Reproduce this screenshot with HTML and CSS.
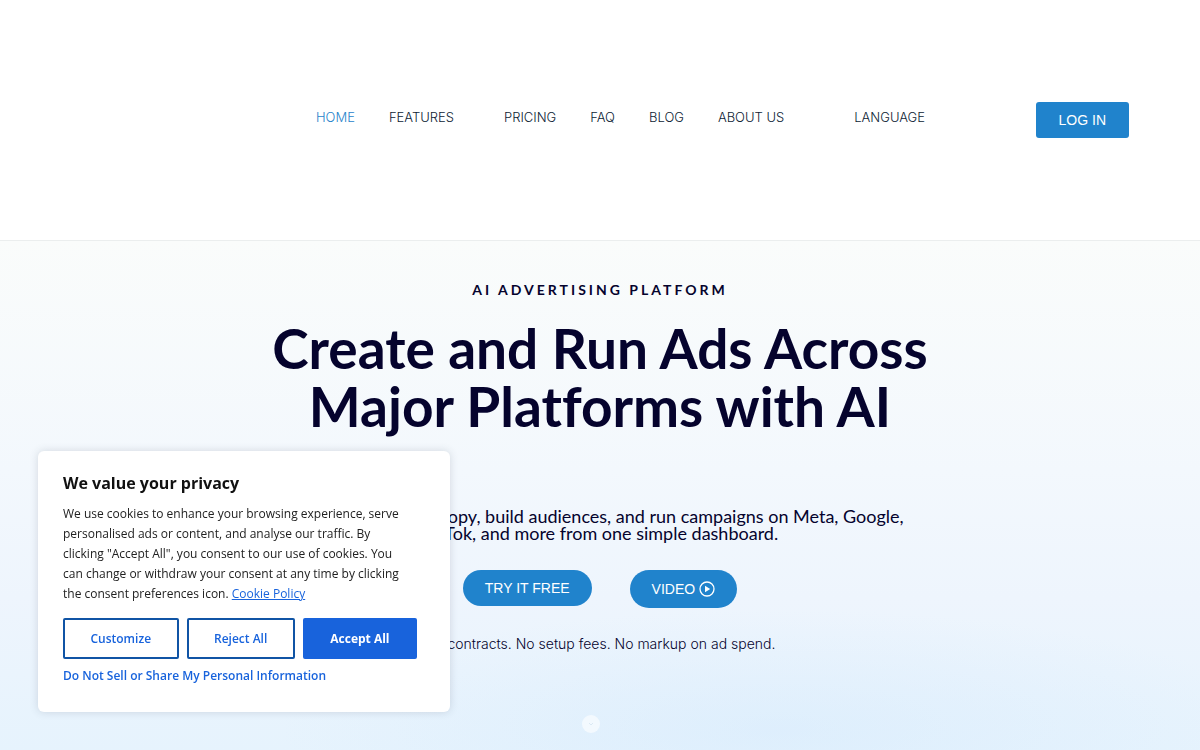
FILE: index.html
```html
<!DOCTYPE html>
<html lang="en">
<head>
    <meta charset="UTF-8">
    <meta name="viewport" content="width=device-width, initial-scale=1.0">
    <title>AI Advertising Platform</title>
    <link rel="stylesheet" href="styles.css">
</head>
<body>
    <header class="header">
        <nav class="nav">
            <a href="#" class="active">HOME</a>
            <a href="#" class="has-menu">FEATURES</a>
            <a href="#">PRICING</a>
            <a href="#">FAQ</a>
            <a href="#">BLOG</a>
            <a href="#" class="has-menu-wide">ABOUT US</a>
            <a href="#">LANGUAGE</a>
        </nav>
        <a href="#" class="login-btn">LOG IN</a>
    </header>

    <main class="hero">
        <p class="eyebrow">AI ADVERTISING PLATFORM</p>
        <h1>Create and Run Ads Across<br>Major Platforms with AI</h1>
        <p class="lead">Generate ads and copy, build audiences, and run campaigns on Meta, Google,<br>TikTok, and more from one simple dashboard.</p>
        <div class="hero-buttons">
            <a href="#" class="pill">TRY IT FREE</a>
            <a href="#" class="pill pill-video">VIDEO
                <svg width="16" height="16" viewBox="0 0 16 16" aria-hidden="true">
                    <circle cx="8" cy="8" r="7" fill="none" stroke="#fff" stroke-width="1.3"/>
                    <path d="M6 4.8v6.4L11.2 8z" fill="#fff"/>
                </svg>
            </a>
        </div>
        <p class="note">No contracts. No setup fees. No markup on ad spend.</p>
        <button class="scroll-dot" aria-label="Scroll down">
            <svg width="6" height="6" viewBox="0 0 6 6"><path d="M1 2l2 2 2-2" fill="none" stroke="#dbe9f4"/></svg>
        </button>
    </main>

    <section class="cookie-box" aria-labelledby="cookie-title">
        <h2 id="cookie-title">We value your privacy</h2>
        <p>We use cookies to enhance your browsing experience, serve<br>personalised ads or content, and analyse our traffic. By<br>clicking "Accept All", you consent to our use of cookies. You<br>can change or withdraw your consent at any time by clicking<br>the consent preferences icon. <a href="#">Cookie Policy</a></p>
        <div class="cookie-buttons">
            <button>Customize</button>
            <button>Reject All</button>
            <button class="accept">Accept All</button>
        </div>
        <a href="#" class="do-not-sell">Do Not Sell or Share My Personal Information</a>
    </section>
</body>
</html>
```

FILE: styles.css
```css
* {
    box-sizing: border-box;
}

body {
    margin: 0;
    min-height: 100vh;
    display: flex;
    flex-direction: column;
    font-family: "Liberation Sans", Arial, sans-serif;
    color: #05032d;
    background-color: #fff;
}

.header {
    display: flex;
    align-items: center;
    justify-content: space-between;
    padding: 102px 71px 102px 316px;
    border-bottom: 1px solid #ebeeee;
}

.nav {
    display: flex;
    gap: 34px;
    padding-bottom: 6px;
}

.nav a {
    font-family: Inter, sans-serif;
    font-size: 13px;
    font-weight: 300;
    line-height: 20px;
    color: #0c1b33;
    text-decoration: none;
}

.nav .active {
    color: #2783cb;
}

.nav .has-menu {
    padding-right: 16px;
}

.nav .has-menu-wide {
    padding-right: 36px;
}

.login-btn {
    padding: 8px 23px;
    border-radius: 3px;
    background-color: #2083cc;
    color: #fff;
    font-size: 14px;
    line-height: 20px;
    text-decoration: none;
}

.hero {
    flex: 1;
    display: flex;
    flex-direction: column;
    align-items: center;
    text-align: center;
    padding: 39px 20px 17px;
    background:
        radial-gradient(ellipse 500px 120px at 65% 96%, rgba(208, 231, 252, 0.4), transparent),
        linear-gradient(#fafcfb, #f3f8fd 45%, #eef5fd 70%, #e6f3fd);
}

.eyebrow {
    margin: 0 0 19px;
    font-family: Lato, sans-serif;
    font-size: 14px;
    font-weight: 700;
    line-height: 20px;
    letter-spacing: 3px;
}

h1 {
    margin: 0;
    font-family: Lato, sans-serif;
    font-size: 55px;
    font-weight: 700;
    line-height: 58px;
    font-variant-ligatures: none;
}

.lead {
    margin: 73px 0 28px;
    font-family: Lato, sans-serif;
    font-size: 18px;
    line-height: 17px;
}

.hero-buttons {
    display: flex;
    align-items: flex-start;
    gap: 38px;
}

.pill {
    display: flex;
    align-items: center;
    gap: 4px;
    padding: 8px 22px;
    border-radius: 20px;
    background-color: #2083cc;
    color: #fff;
    font-size: 14px;
    line-height: 20px;
    text-decoration: none;
}

.pill-video {
    padding: 9px 22px;
}

.note {
    margin: 26px 0 0;
    font-family: Inter, sans-serif;
    font-size: 14px;
    font-weight: 300;
    line-height: 20px;
}

.scroll-dot {
    display: flex;
    align-items: center;
    justify-content: center;
    width: 18px;
    height: 18px;
    margin-top: auto;
    margin-right: 18px;
    padding: 0;
    border: none;
    border-radius: 50%;
    background-color: #f3f9fe;
}

.cookie-box {
    position: fixed;
    left: 38px;
    bottom: 38px;
    width: 412px;
    padding: 20px 33px 26px 25px;
    border-radius: 6px;
    background-color: #fff;
    box-shadow: 0 0 8px rgba(60, 70, 90, 0.18);
    font-family: "Open Sans", sans-serif;
    font-size: 12px;
    line-height: 20px;
    color: #212121;
}

.cookie-box h2 {
    margin: 0 0 9px;
    font-size: 16px;
    line-height: 24px;
    color: #111;
}

.cookie-box p {
    margin: 0 0 14px;
}

.cookie-box p a {
    font-size: 12px;
}

.cookie-box a {
    color: #1863dc;
}

.cookie-buttons {
    display: flex;
    gap: 8px;
    margin-bottom: 7px;
}

.cookie-buttons button {
    flex: 1 1 auto;
    padding: 8px 22px;
    border: 2px solid #1054a5;
    border-radius: 2px;
    background-color: #fff;
    color: #1863dc;
    font: 600 12px/21px "Open Sans", sans-serif;
}

.cookie-buttons .accept {
    border-color: #1863dc;
    background-color: #1863dc;
    color: #fff;
    font-weight: 700;
}

.cookie-box .do-not-sell {
    display: block;
    font-weight: 600;
    text-decoration: none;
}
```
